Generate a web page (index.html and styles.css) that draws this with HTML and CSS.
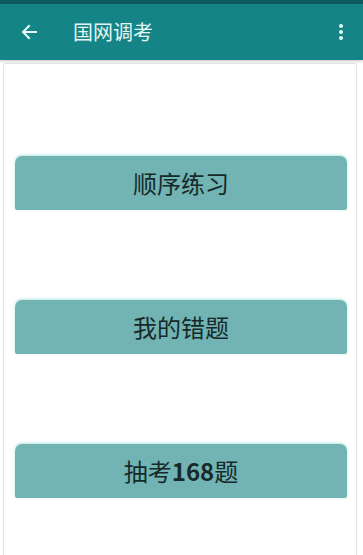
FILE: index.html
```html
<!DOCTYPE html>
<html lang="zh">
<head>
<meta charset="utf-8">
<title>国网调考</title>
<link rel="stylesheet" href="styles.css">
</head>
<body>
<div class="status"></div>
<header class="toolbar">
  <svg class="back" width="16" height="16" viewBox="0 0 16 16">
    <path d="M15 8H2M8 2L2 8l6 6" fill="none" stroke="#e6f7f7" stroke-width="2" stroke-linecap="square"/>
  </svg>
  <h1 class="title">国网调考</h1>
  <div class="more"><span></span><span></span><span></span></div>
</header>
<main class="card">
  <button class="btn">顺序练习</button>
  <button class="btn">我的错题</button>
  <button class="btn">抽考<span class="num">168</span>题</button>
</main>
</body>
</html>
```
FILE: styles.css
```css
html, body {
  margin: 0;
  padding: 0;
  background: #ffffff;
  overflow: hidden;
  height: 555px;
}
body {
  font-family: "Noto Sans CJK SC", "Noto Sans", sans-serif;
}
.status {
  height: 4px;
  background: #0c5b5e;
}
.toolbar {
  height: 56px;
  background: #158487;
  display: flex;
  align-items: center;
  box-shadow: 0 1px 3px rgba(0,0,0,0.25);
  position: relative;
  z-index: 1;
}
.back {
  margin-left: 21px;
}
.title {
  margin: 0 0 0 36px;
  font-size: 20px;
  font-weight: 400;
  color: #e3f6f6;
  line-height: 1;
  flex: 1;
}
.more {
  display: flex;
  flex-direction: column;
  gap: 2px;
  margin-right: 20px;
}
.more span {
  width: 4px;
  height: 4px;
  border-radius: 50%;
  background: #dff7f7;
}
.card {
  margin: 3px 6px 0 3px;
  border: 1px solid #e2e4e4;
  border-bottom: none;
  border-radius: 3px 3px 0 0;
  height: 492px;
  padding: 92px 9px 0 11px;
  display: flex;
  flex-direction: column;
  gap: 90px;
  box-sizing: border-box;
}
.btn {
  height: 54px;
  border: none;
  border-radius: 7px 7px 2px 2px;
  background: #72b3b4;
  box-shadow: 0 -1px 3px rgba(120, 210, 210, 0.55);
  font-family: "Noto Sans CJK SC", "Noto Sans", sans-serif;
  font-size: 24px;
  color: #162a2a;
  padding: 0;
  line-height: 1;
  flex: none;
}
.num {
  font-weight: 600;
}
```
